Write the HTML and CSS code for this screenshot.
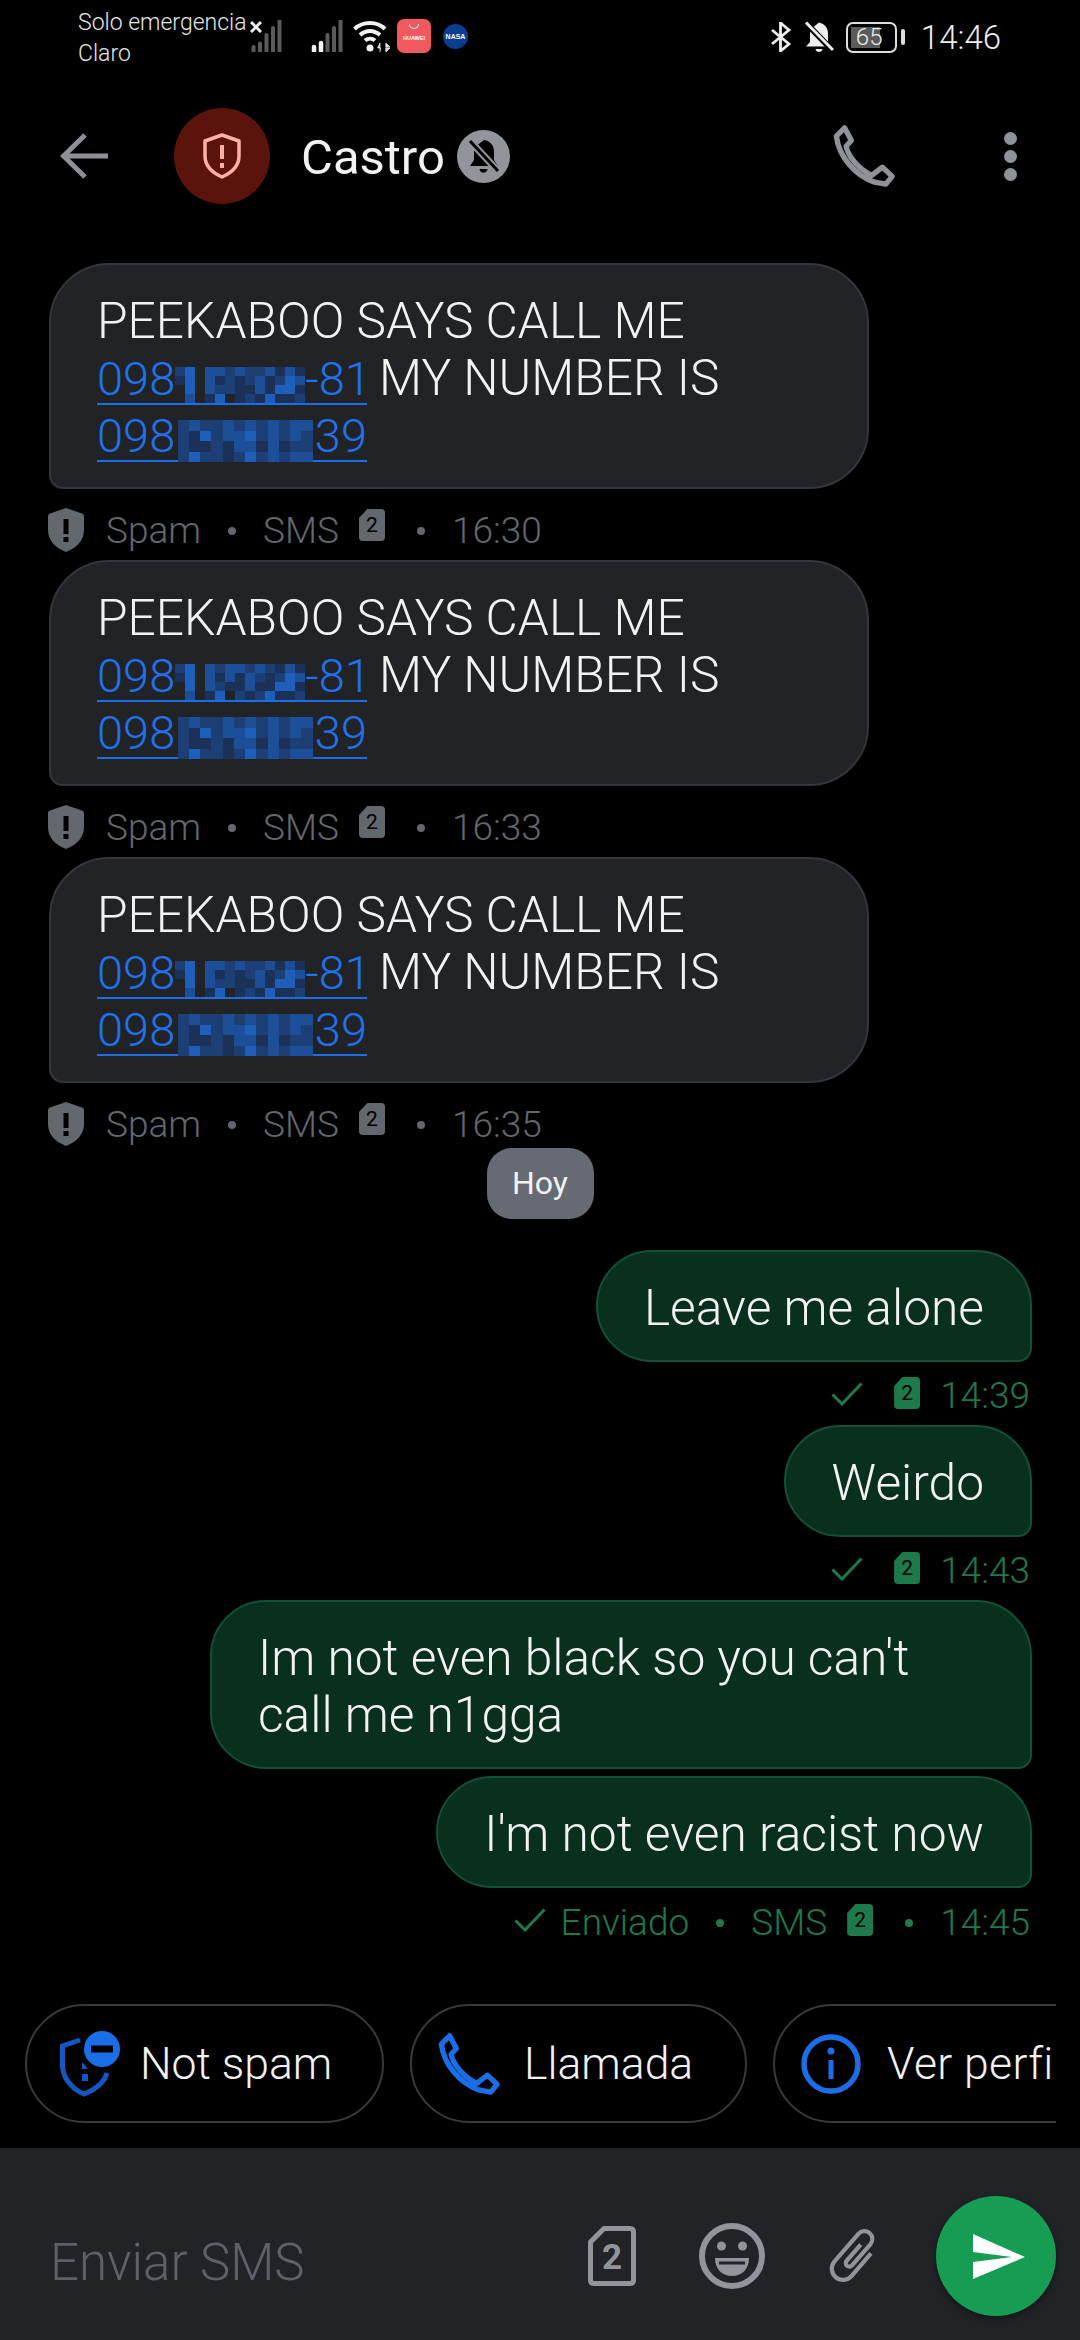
FILE: index.html
```html
<!DOCTYPE html>
<html lang="es">
<head>
    <meta charset="UTF-8">
    <meta name="viewport" content="width=device-width, initial-scale=1.0">
    <title>Castro</title>
    <link rel="stylesheet" href="styles.css">
</head>
<body>
    <svg class="defs" width="0" height="0">
        <symbol id="spam-shield" viewBox="0 0 36 44">
            <path fill-rule="evenodd" d="M18 0 34 5.500Q36 6 36 8V22C36 33 28 40 18 44 8 40 0 33 0 22V8Q0 6 2 5.500ZM15.500 11V26H20.500V11ZM15.500 29V34H20.500V29Z"/>
        </symbol>
        <symbol id="check" viewBox="0 0 32 24">
            <path d="M1.500 12.500 11 22 30.500 1.500" fill="none" stroke="currentColor" stroke-width="3"/>
        </symbol>
        <symbol id="handset" viewBox="-3 -3 66 66">
            <path d="M10 1 17 14 11.500 20C14 32 26 44 38 50L49 41.500 59 51 52.500 59 41 57C20 50 4 30 1.500 9.500Z" fill="none" stroke="currentColor" stroke-width="5.500" stroke-linejoin="round"/>
        </symbol>
    </svg>

    <div class="status-bar">
        <div class="carrier">
            <div>Solo emergencia</div>
            <div>Claro</div>
        </div>
        <div class="status-icons-left">
            <svg class="signal" width="32" height="32" viewBox="0 0 32 32">
                <path d="M3.500 27V31M10 23.500V31M16.500 15V31M23 8V31M29.500 1V31" stroke="#5a5a5a" stroke-width="4" stroke-linecap="round"/>
            </svg>
            <svg class="signal-x" width="12" height="12" viewBox="0 0 12 12"><path d="M1 1 11 11M11 1 1 11" stroke="#eee" stroke-width="3"/></svg>
            <svg class="signal signal-two" width="32" height="32" viewBox="0 0 32 32">
                <path d="M3 27V31M10 23V31" stroke="#f2f2f2" stroke-width="4.500" stroke-linecap="round"/>
                <path d="M16.500 15V31M23 8V31M29.500 1V31" stroke="#5a5a5a" stroke-width="4" stroke-linecap="round"/>
            </svg>
            <svg class="wifi" width="38" height="34" viewBox="0 0 38 34">
                <path d="M1.500 10C10 2 24 2 32 10M7 16C13 10.500 21 10.500 27 16M12 21.500C15 19 19 19 22 21.500" fill="none" stroke="#f2f2f2" stroke-width="4"/>
                <circle cx="17" cy="29" r="3.500" fill="#f2f2f2"/>
                <path d="M27 33V24L24.500 29H28M33 24V33M33 24 37 28H33ZM33 33 37 29H33Z" fill="#ddd" stroke="#ddd" stroke-width=".8"/>
            </svg>
            <div class="huawei"><span class="huawei-arc"></span><span>HUAWEI</span></div>
            <div class="nasa"><span>NASA</span></div>
        </div>
        <div class="status-icons-right">
            <svg width="22" height="30" viewBox="0 0 22 30"><path d="M2 8 19 22 10.500 29V1L19 8 2 22" fill="none" stroke="#eee" stroke-width="2.800"/></svg>
            <svg class="muted" width="30" height="33" viewBox="0 0 30 33">
                <path d="M15 1.500C21 3 24 7 24 13V21L28 25.500H2L6 21V13C6 11 6.500 9.500 7 8ZM11.500 28H18.500C18 32 12 32 11.500 28Z" fill="#eee"/>
                <path d="M1 1 29 30" stroke="#000" stroke-width="6"/>
                <path d="M2 1.500 29 29" stroke="#eee" stroke-width="3"/>
            </svg>
            <div class="battery"><div class="battery-body"><span class="battery-fill"></span><span class="battery-num">65</span></div><span class="battery-tip"></span></div>
            <div class="clock">14:46</div>
        </div>
    </div>

    <div class="header">
        <svg class="back" width="48" height="46" viewBox="0 0 48 46"><path d="M48 23H4M25 2 3.500 23 25 44" fill="none" stroke="#8d9197" stroke-width="5"/></svg>
        <div class="avatar">
            <svg width="38" height="46" viewBox="0 0 38 46">
                <path d="M19 2 36 8V23C36 33 28 40 19 44 10 40 2 33 2 23V8Z" fill="none" stroke="#ffb1a6" stroke-width="3.500" stroke-linejoin="round"/>
                <path d="M19 12V26M19 30V35" stroke="#ffb1a6" stroke-width="4"/>
            </svg>
        </div>
        <div class="contact">Castro</div>
        <svg class="contact-muted" width="53" height="53" viewBox="0 0 53 53">
            <circle cx="26.500" cy="26.500" r="26.500" fill="#91959b"/>
            <path d="M27 10C34 11 37 16 37 22V30L41 36H13L17 30V22C17 20 17.500 18 18 17ZM22.500 39H30.500C30 44 23 44 22.500 39Z" fill="#000"/>
            <path d="M12 10 42 42" stroke="#91959b" stroke-width="7"/>
            <path d="M13 11 41 41" stroke="#000" stroke-width="3"/>
        </svg>
        <svg class="call" width="64" height="64"><use href="#handset"/></svg>
        <div class="overflow"><span></span><span></span><span></span></div>
    </div>

    <div class="thread">
        <div class="bubble in">PEEKABOO SAYS CALL ME<br><a class="num"><span>098</span><span class="mosaic mosaic-a" data-cells="a"></span><span>-81</span></a> MY NUMBER IS<br><a class="num"><span>098</span><span class="mosaic mosaic-b" data-cells="b"></span><span>39</span></a></div>
        <div class="meta meta-in">
            <svg class="spam-icon" width="36" height="44"><use href="#spam-shield"/></svg>
            <span>Spam</span><i class="dot"></i><span>SMS</span><b class="sim">2</b><i class="dot"></i><span>16:30</span>
        </div>
        <div class="bubble in">PEEKABOO SAYS CALL ME<br><a class="num"><span>098</span><span class="mosaic mosaic-a" data-cells="c"></span><span>-81</span></a> MY NUMBER IS<br><a class="num"><span>098</span><span class="mosaic mosaic-b" data-cells="b"></span><span>39</span></a></div>
        <div class="meta meta-in">
            <svg class="spam-icon" width="36" height="44"><use href="#spam-shield"/></svg>
            <span>Spam</span><i class="dot"></i><span>SMS</span><b class="sim">2</b><i class="dot"></i><span>16:33</span>
        </div>
        <div class="bubble in">PEEKABOO SAYS CALL ME<br><a class="num"><span>098</span><span class="mosaic mosaic-a" data-cells="a"></span><span>-81</span></a> MY NUMBER IS<br><a class="num"><span>098</span><span class="mosaic mosaic-b" data-cells="b"></span><span>39</span></a></div>
        <div class="meta meta-in">
            <svg class="spam-icon" width="36" height="44"><use href="#spam-shield"/></svg>
            <span>Spam</span><i class="dot"></i><span>SMS</span><b class="sim">2</b><i class="dot"></i><span>16:35</span>
        </div>

        <div class="day">Hoy</div>

        <div class="bubble out">Leave me alone</div>
        <div class="meta meta-out">
            <svg class="check" width="32" height="24"><use href="#check"/></svg>
            <b class="sim">2</b><span class="time">14:39</span>
        </div>
        <div class="bubble out">Weirdo</div>
        <div class="meta meta-out">
            <svg class="check" width="32" height="24"><use href="#check"/></svg>
            <b class="sim">2</b><span class="time">14:43</span>
        </div>
        <div class="bubble out out-long">Im not even black so you can't<br>call me n1gga</div>
        <div class="bubble out out-last">I'm not even racist now</div>
        <div class="meta meta-out meta-sent">
            <svg class="check-sent" width="32" height="24"><use href="#check"/></svg>
            <span>Enviado</span><i class="dot"></i><span>SMS</span><b class="sim">2</b><i class="dot"></i><span>14:45</span>
        </div>
    </div>

    <div class="chips">
        <div class="chip chip-spam">
            <svg width="60" height="66" viewBox="0 0 60 66">
                <path d="M20 9 2.500 15V34C2.500 47 12 58 24 63 34 59 44 52 47 42" fill="none" stroke="#1557c2" stroke-width="5"/>
                <path d="M22 31 28 38H22ZM22 43H28V50H22Z" fill="#1557c2"/>
                <circle cx="42" cy="18" r="18" fill="#1a6fe8"/>
                <rect x="31" y="14.500" width="22" height="7" fill="#000"/>
            </svg>
            <span>Not spam</span>
        </div>
        <div class="chip chip-call">
            <svg width="64" height="64"><use href="#handset"/></svg>
            <span>Llamada</span>
        </div>
        <div class="chip chip-info">
            <svg width="60" height="60" viewBox="0 0 60 60">
                <circle cx="30" cy="30" r="27" fill="none" stroke="#1a6fe8" stroke-width="5.500"/>
                <circle cx="30" cy="17" r="3.500" fill="#1a6fe8"/>
                <path d="M30 26V45" stroke="#1a6fe8" stroke-width="5"/>
            </svg>
            <span>Ver perfil</span>
        </div>
    </div>

    <div class="composer">
        <div class="placeholder">Enviar SMS</div>
        <svg class="sim-large" width="48" height="60" viewBox="0 0 48 60">
            <path d="M16 2.500H42Q45.500 2.500 45.500 6V54Q45.500 57.500 42 57.500H6Q2.500 57.500 2.500 54V16Z" fill="none" stroke="#91959b" stroke-width="5" stroke-linejoin="round"/>
            <text x="24" y="43" text-anchor="middle" class="sim-large-num">2</text>
        </svg>
        <svg class="smile" width="66" height="66" viewBox="0 0 66 66">
            <circle cx="33" cy="33" r="30" fill="none" stroke="#91959b" stroke-width="6"/>
            <circle cx="22.500" cy="23" r="4.500" fill="#91959b"/>
            <circle cx="43.500" cy="23" r="4.500" fill="#91959b"/>
            <path d="M16 35H50C50 46 43 53 33 53S16 46 16 35Z" fill="#91959b"/>
            <path d="M20 40H46" stroke="#212327" stroke-width="3"/>
        </svg>
        <svg class="clip" width="56" height="62" viewBox="-18 2 60 64">
            <path transform="rotate(41 12 34)" d="M24 20V52A12 12 0 0 1 0 52V13A8.500 8.500 0 0 1 17 13V43A3.800 3.800 0 0 1 9.400 43V20" fill="none" stroke="#91959b" stroke-width="4.500"/>
        </svg>
        <div class="send">
            <svg width="52" height="45" viewBox="0 0 52 45"><path d="M0 0 52 23 0 45V28L39 23 0 18Z" fill="#fff"/></svg>
        </div>
    </div>

    <script src="script.js"></script>
</body>
</html>
```
FILE: styles.css
```css
* {
    box-sizing: border-box;
}

body {
    font-family: Roboto, "Noto Sans", sans-serif;
    font-weight: 300;
    background-color: #000;
    color: #f2f2f2;
    margin: 0;
    width: 1080px;
    height: 2340px;
    overflow: hidden;
    display: flex;
    flex-direction: column;
}

.defs {
    display: block;
    height: 0;
}

.status-bar {
    height: 70px;
    display: flex;
    align-items: flex-start;
    padding-left: 78px;
    flex: none;
}

.carrier {
    font-size: 23px;
    line-height: 31px;
    padding-top: 7px;
    width: 172px;
    color: #e6e6e6;
    white-space: nowrap;
}

.status-icons-left {
    position: relative;
    display: flex;
    align-items: flex-start;
    padding-top: 20px;
}

.signal-x {
    position: absolute;
    left: 0;
    top: 21px;
}

.signal-two {
    margin-left: 29px;
}

.wifi {
    margin-left: 10px;
    margin-top: -1px;
}

.huawei {
    width: 34px;
    height: 34px;
    margin-left: 6px;
    margin-top: -1px;
    background-color: #f0595d;
    border-radius: 7px;
    color: #fff;
    font-family: "Liberation Sans", sans-serif;
    font-size: 5.5px;
    font-weight: 700;
    text-align: center;
    line-height: 6px;
    padding-top: 5px;
}

.huawei-arc {
    display: block;
    width: 10px;
    height: 5px;
    margin: 0 auto 6px;
    border: 1px solid #fff;
    border-top: 0;
    border-radius: 0 0 6px 6px;
}

.nasa {
    width: 25px;
    height: 25px;
    margin-left: 12px;
    margin-top: 4px;
    border-radius: 50%;
    background-color: #0b3d91;
    color: #fff;
    font-family: "Liberation Sans", sans-serif;
    font-size: 7px;
    font-weight: 700;
    line-height: 25px;
    text-align: center;
}

.status-icons-right {
    margin-left: auto;
    padding-right: 79px;
    display: flex;
    align-items: center;
    height: 74px;
}

.muted {
    margin-left: 12px;
}

.battery {
    display: flex;
    align-items: center;
    margin-left: 12px;
}

.battery-body {
    position: relative;
    width: 51px;
    height: 31px;
    border: 2.5px solid #ddd;
    border-radius: 7px;
    overflow: hidden;
}

.battery-fill {
    position: absolute;
    left: 3px;
    top: 3px;
    bottom: 3px;
    width: 29px;
    background-color: #5a5a5a;
}

.battery-num {
    position: absolute;
    left: 8px;
    top: 0;
    font-size: 24px;
    line-height: 26px;
    color: #eee;
}

.battery-tip {
    width: 4px;
    height: 16px;
    margin-left: 4px;
    background-color: #ddd;
    border-radius: 2px;
}

.clock {
    margin-left: 16px;
    font-size: 33px;
    color: #eee;
}

.header {
    height: 172px;
    flex: none;
    display: flex;
    align-items: center;
    padding-left: 60px;
}

.avatar {
    width: 96px;
    height: 96px;
    margin-left: 66px;
    border-radius: 50%;
    background-color: #5b140c;
    display: flex;
    align-items: center;
    justify-content: center;
}

.contact {
    margin-left: 31px;
    padding-top: 2px;
    font-size: 49px;
    font-weight: 400;
}

.contact-muted {
    margin-left: 12px;
}

.call {
    margin-left: auto;
    color: #8f9399;
}

.overflow {
    display: flex;
    flex-direction: column;
    gap: 5px;
    margin-left: 108px;
    margin-right: 63px;
}

.overflow span {
    width: 13px;
    height: 13px;
    border-radius: 50%;
    background-color: #8f9399;
}

.thread {
    flex: 1;
    overflow: hidden;
    padding-top: 21px;
    display: flex;
    flex-direction: column;
}

.bubble {
    font-size: 49.7px;
    line-height: 57px;
    border: 2px solid;
    padding: 28px 46px 23px;
    flex: none;
}

.in {
    align-self: flex-start;
    width: 820px;
    margin-left: 49px;
    background-color: #212327;
    border-color: #34363b;
    border-radius: 60px 60px 60px 14px;
}

.out {
    align-self: flex-end;
    margin-right: 48px;
    background-color: #09301c;
    border-color: #135136;
    border-radius: 56px 56px 14px 56px;
}

.out-long {
    width: 822px;
}

.out-last {
    margin-top: 7px;
}

.num {
    display: inline-flex;
    justify-content: space-between;
    align-items: flex-end;
    width: 270px;
    height: 46px;
    font-size: 47px;
    color: #1f72ec;
    border-bottom: 2px solid #1a6fe8;
}

.num span {
    line-height: 48px;
}

.mosaic {
    display: grid;
    flex: none;
}

.mosaic-a {
    width: 130px;
    height: 36px;
    grid-template-columns: repeat(13, 1fr);
    grid-template-rows: repeat(4, 1fr);
}

.mosaic-b {
    width: 135px;
    height: 42px;
    margin-bottom: -2px;
    grid-template-columns: repeat(12, 1fr);
    grid-template-rows: repeat(4, 1fr);
}

.shade-1 { background-color: #1c3157; }
.shade-2 { background-color: #1c3f75; }
.shade-3 { background-color: #1c4f98; }
.shade-4 { background-color: #1d5fbb; }

.meta {
    display: flex;
    align-items: flex-start;
    font-size: 37px;
    line-height: 40px;
    flex: none;
}

.meta-in {
    height: 71px;
    margin-left: 48px;
    padding-top: 22px;
    color: #63676e;
}

.meta-out {
    height: 63px;
    align-self: flex-end;
    margin-right: 50px;
    padding-top: 14px;
    color: #1d7a4b;
}

.meta-sent {
    padding-top: 15px;
}

.spam-icon {
    fill: #63676e;
    margin-top: -3px;
    margin-right: 22px;
}

.dot {
    width: 8px;
    height: 8px;
    margin: 16px 27px 0;
    border-radius: 50%;
    background-color: currentColor;
}

.sim {
    width: 26px;
    height: 32px;
    margin-left: 20px;
    margin-top: -2px;
    font-size: 21px;
    line-height: 33px;
    text-align: center;
    color: #000;
    background-color: #63676e;
    border-radius: 4px;
    clip-path: polygon(32% 0, 100% 0, 100% 100%, 0 100%, 0 28%);
}

.sim + .dot {
    margin-left: 32px;
}

.meta-out .sim {
    background-color: #1d7a4b;
    margin-top: 1px;
}

.check {
    margin-top: 6px;
    margin-right: 31px;
}

.meta-out .check + .sim {
    margin-left: 0;
}

.time {
    margin-left: 20px;
}

.check-sent {
    margin-top: 5px;
    margin-right: 15px;
}

.day {
    align-self: center;
    margin: -6px 0 31px;
    width: 107px;
    height: 71px;
    border-radius: 25px;
    background-color: #656a73;
    font-size: 32px;
    font-weight: 400;
    line-height: 71px;
    text-align: center;
    flex: none;
}

.chips {
    flex: none;
    width: 1056px;
    height: 144px;
    padding-left: 25px;
    display: flex;
    gap: 26px;
    overflow: hidden;
}

.chip {
    flex: none;
    height: 119px;
    display: flex;
    align-items: center;
    gap: 20px;
    border: 2.5px solid #3a3a3a;
    border-radius: 60px;
    font-size: 44.5px;
    white-space: nowrap;
}

.chip-spam {
    width: 359px;
    padding-left: 33px;
}

.chip-call {
    width: 337px;
    padding-left: 25px;
    gap: 23px;
}

.chip-call svg {
    color: #1a6fe8;
}

.chip-info {
    width: 340px;
    padding-left: 26px;
    gap: 26px;
    letter-spacing: 0.4px;
}

.composer {
    flex: none;
    height: 192px;
    background-color: #212327;
    display: flex;
    align-items: center;
    padding-left: 50px;
    padding-top: 24px;
}

.placeholder {
    font-size: 51px;
    color: #5c6067;
    flex: 1;
    padding-top: 12px;
}

.sim-large-num {
    font-family: Roboto, sans-serif;
    font-size: 35px;
    font-weight: 700;
    fill: #91959b;
}

.sim-large {
    margin-right: 63px;
}

.smile {
    margin-right: 61px;
}

.clip {
    margin-right: 54px;
}

.send {
    width: 120px;
    height: 120px;
    margin-right: 24px;
    border-radius: 50%;
    background-color: #179c54;
    box-shadow: 0 3px 6px rgba(0, 0, 0, 0.4);
    display: flex;
    align-items: center;
    justify-content: center;
    padding-left: 6px;
}
```
FILE: script.js
```js
// pixelated phone numbers, one digit per cell (0 = no tint)
const mosaics = {
    a: ["2403323223131", "1403121231243", "0403221131441", "0301401214112"],
    b: ["232232323233", "214233423232", "211213313122", "242212423233"],
    c: ["2403233232131", "1403131321243", "0403211311441", "0301402124112"]
};

document.querySelectorAll(".mosaic").forEach(el => {
    mosaics[el.dataset.cells].join("").split("").forEach(shade => {
        const cell = document.createElement("span");
        if (shade !== "0") cell.className = "shade-" + shade;
        el.appendChild(cell);
    });
});
```
